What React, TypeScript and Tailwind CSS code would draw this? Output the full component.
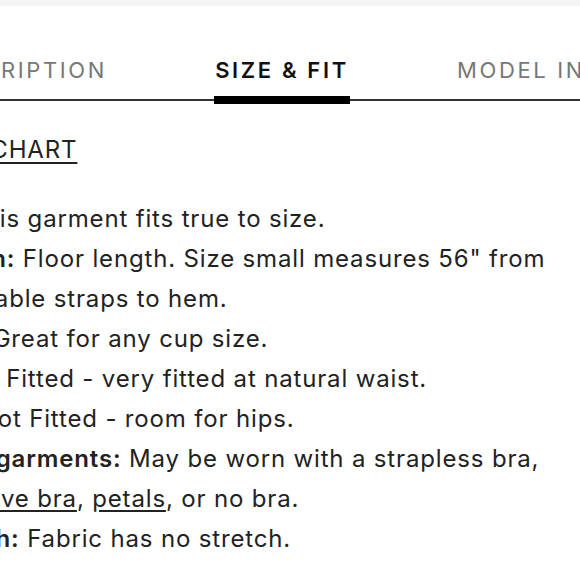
const tabs = ['DESCRIPTION', 'SIZE & FIT', 'MODEL INFO'];

const details: { label: string; text: React.ReactNode }[] = [
  { label: 'Fit:', text: 'This garment fits true to size.' },
  { label: 'Length:', text: 'Floor length. Size small measures 56" from adjustable straps to hem.' },
  { label: 'Bust:', text: 'Great for any cup size.' },
  { label: 'Waist:', text: 'Fitted - very fitted at natural waist.' },
  { label: 'Hip:', text: 'Not Fitted - room for hips.' },
  {
    label: 'Undergarments:',
    text: (
      <>
        May be worn with a strapless bra,{' '}
        <a href="#" className="underline underline-offset-[3px]">adhesive bra</a>,{' '}
        <a href="#" className="underline underline-offset-[3px]">petals</a>, or no bra.
      </>
    ),
  },
  { label: 'Stretch:', text: 'Fabric has no stretch.' },
];

function Tab({ label, active }: { label: string; active?: boolean }) {
  return (
    <div className="flex w-full flex-col items-center">
      <span
        className={
          active
            ? 'whitespace-nowrap text-[22px] font-semibold leading-6 tracking-[0.12em] text-[#111]'
            : 'whitespace-nowrap text-[22px] leading-6 tracking-[0.12em] text-[#777]'
        }
      >
        {label}
      </span>
      <div className={active ? 'mt-[14px] h-[8px] w-full bg-black' : 'mt-[14px] h-[8px] w-full'} />
    </div>
  );
}

export default function App() {
  return (
    <div className="h-[580px] w-[580px] overflow-hidden bg-white text-[#222] font-['Inter',sans-serif]">
      <div className="h-[6px] bg-[#f4f4f4]" />

      <nav className="relative mt-[52px]">
        <div className="absolute bottom-[3px] left-0 right-0 h-[2px] bg-[#333]" />
        <div className="relative flex items-end">
          <div className="flex w-[107px] shrink-0 justify-end">
            <div className="flex flex-col">
              <Tab label={tabs[0]} />
            </div>
          </div>
          <div className="ml-[107px] w-[136px] shrink-0">
            <Tab label={tabs[1]} active />
          </div>
          <div className="ml-[107px] shrink-0">
            <Tab label={tabs[2]} />
          </div>
        </div>
      </nav>

      <div className="-ml-[79px] w-[700px] text-[24px] leading-[40px] tracking-[0.035em]">
        <a href="#" className="ml-[7px] mt-[26px] inline-block underline underline-offset-[4px]">
          SIZE CHART
        </a>
        <ul className="mt-[29px] w-[690px]">
          {details.map((d) => (
            <li key={d.label}>
              <span className="font-semibold">{d.label}</span> {d.text}
            </li>
          ))}
        </ul>
      </div>
    </div>
  );
}
